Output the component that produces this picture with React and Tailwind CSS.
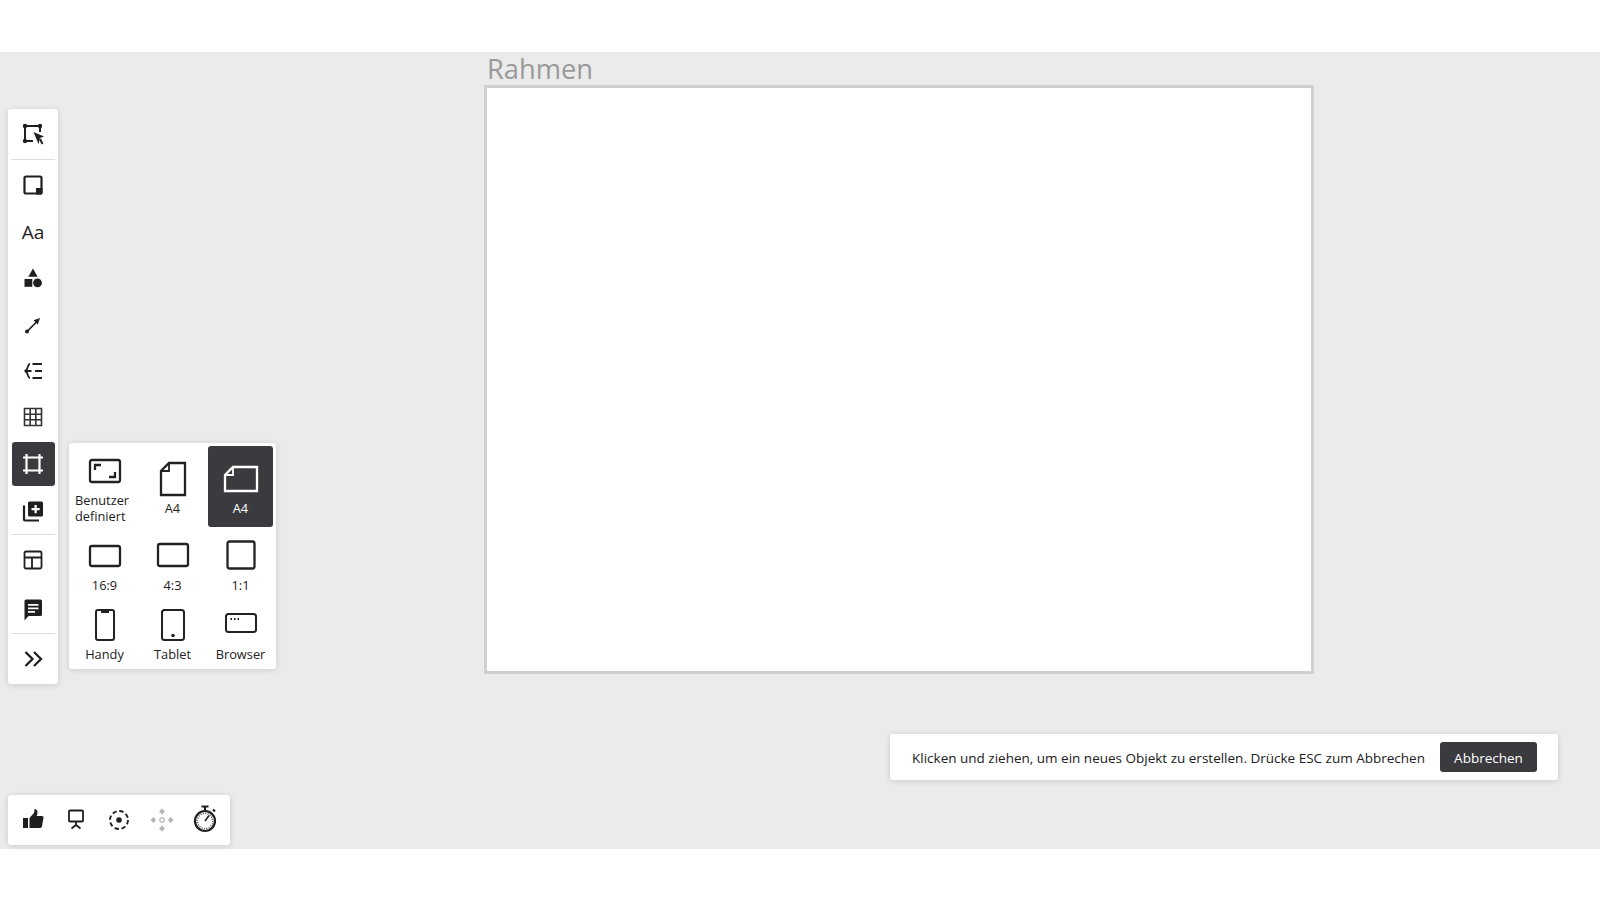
import React from "react";

const I = ({ children, s = 24, v = 24, c = "" }) => (
  <svg width={s} height={s} viewBox={`0 0 ${v} ${v}`} fill="none" stroke="currentColor" strokeWidth="2" className={c}>{children}</svg>
);

const Select = () => (
  <I v={24}>
    <path d="M4 4h15M4 4v15M4 19h8M19 4v6" strokeWidth="2" />
    <circle cx="4" cy="4" r="2.200" fill="currentColor" stroke="none" />
    <circle cx="19" cy="4" r="2.200" fill="currentColor" stroke="none" />
    <circle cx="4" cy="19" r="2.200" fill="currentColor" stroke="none" />
    <path d="M12.500 10l10.500 4.500-4 1.500-1.500 6z" fill="currentColor" stroke="none" />
    <path d="M19 17l2.500 5" strokeWidth="2" />
  </I>
);
const Sticky = () => (
  <I>
    <rect x="3.500" y="3.500" width="17" height="17" rx="1.500" strokeWidth="2.200" />
    <path d="M15 15h6.500v5a1.500 1.500 0 0 1-1.500 1.500h-5z" fill="currentColor" stroke="none" />
  </I>
);
const Shapes = () => (
  <I>
    <path d="M12 2.500l4.700 8.300h-9.400z" fill="currentColor" stroke="none" />
    <rect x="3.500" y="13" width="7.800" height="7.800" fill="currentColor" stroke="none" />
    <circle cx="16.500" cy="16.800" r="4.400" fill="currentColor" stroke="none" />
  </I>
);
const Conn = () => (
  <I>
    <circle cx="6" cy="18.500" r="2" fill="currentColor" stroke="none" />
    <path d="M6 18.500L16 8.500" strokeWidth="1.700" />
    <path d="M19 5l-6.500 2.200 4.300 4.300z" fill="currentColor" stroke="none" />
  </I>
);
const MindMap = () => (
  <I>
    <path d="M11.500 5H21M14 12h7M11.500 19H21" strokeWidth="2" />
    <path d="M9 5C6 5 7.500 12 3.500 12c4 0 2.500 7 5.500 7M3.500 12h7" strokeWidth="1.800" />
  </I>
);
const Grid = () => (
  <I>
    <path d="M3.500 3.500h17v17h-17zM3.500 9.200h17M3.500 14.800h17M9.200 3.500v17M14.800 3.500v17" strokeWidth="1.600" stroke="#333" />
  </I>
);
const Frame = () => (
  <I>
    <path d="M5.500 2v20M18.500 2v20M2 5.500h20M2 18.500h20" strokeWidth="2.200" />
  </I>
);
const AddLib = () => (
  <I>
    <path d="M3 6.500v14a1 1 0 0 0 1 1h14" strokeWidth="2.200" />
    <path fillRule="evenodd" clipRule="evenodd" d="M8.500 2.500h12a1.500 1.500 0 0 1 1.500 1.500v12a1.500 1.500 0 0 1-1.500 1.500h-12A1.500 1.500 0 0 1 7 16V4a1.500 1.500 0 0 1 1.500-1.500zM13.500 6v3H10.500v2.200h3v3h2.200v-3h3V9h-3V6z" fill="currentColor" stroke="none" />
  </I>
);
const Layout = () => (
  <I>
    <rect x="3.500" y="3.500" width="17" height="17" rx="1.500" strokeWidth="1.800" />
    <path d="M3.500 9.500h17M11 9.500v11" strokeWidth="1.800" />
  </I>
);
const Comment = () => (
  <I>
    <path fillRule="evenodd" clipRule="evenodd" d="M5 2.500h14.500A1.500 1.500 0 0 1 21 4v13.500a1.500 1.500 0 0 1-1.500 1.500H7.500L3.500 23.500V4A1.500 1.500 0 0 1 5 2.500zM7 7v1.800h10.500V7zM7 10.500v1.800h10.500v-1.800zM7 14v1.800h7V14z" fill="currentColor" stroke="none" />
  </I>
);
const More = () => (
  <I>
    <path d="M4.500 5l7 7-7 7M13 5l7 7-7 7" strokeWidth="2.300" />
  </I>
);

const Tool = ({ h = "h-[46px]", active, children }) => (
  <div className={`${h} flex items-center justify-center shrink-0`}>
    <div className={`w-[43px] h-[44px] rounded-[3px] flex items-center justify-center ${active ? "bg-[#3b3b3f] text-white" : "text-[#1f1f1f]"}`}>
      {children}
    </div>
  </div>
);
const Sep = () => <div className="h-px bg-[#dedede] mx-[3px] shrink-0" />;

const Tile = ({ label, active, icon, h, iconH, labelC = "" }) => (
  <div className={`${h} rounded-[3px] flex flex-col items-center ${active ? "bg-[#3b3b3f] text-white" : "text-[#222]"}`}>
    <div className={`${iconH} flex items-end justify-center shrink-0`}>{icon}</div>
    <div className={`text-[12.800px] leading-[15.500px] text-center whitespace-pre-line ${labelC}`}>{label}</div>
  </div>
);

const App = () => (
  <div className="w-[1600px] h-[900px] bg-white flex flex-col overflow-hidden" style={{ fontFamily: '"Open Sans","Noto Sans",sans-serif' }}>
    <div className="h-[52px] shrink-0 bg-white" />
    <div className="relative h-[797px] shrink-0 bg-[#ebebeb] pl-[484px]">
      <div className="text-[27.300px] leading-[33px] text-[#9a9a9a] pl-[3px]">Rahmen</div>
      <div className="w-[830px] h-[589px] bg-white border-[3px] border-[#d0d0d0]" />

      <div className="absolute left-[8px] top-[57px] w-[50px] h-[575px] bg-white rounded-[3px] shadow-[0_1px_6px_rgba(0,0,0,0.14)] flex flex-col">
        <Tool h="h-[50px]"><Select /></Tool>
        <Sep />
        <Tool h="h-[49px]"><Sticky /></Tool>
        <Tool><span className="text-[19px] leading-none">Aa</span></Tool>
        <Tool><Shapes /></Tool>
        <Tool h="h-[47px]"><Conn /></Tool>
        <Tool><MindMap /></Tool>
        <Tool><Grid /></Tool>
        <Tool h="h-[47px]" active><Frame /></Tool>
        <Tool h="h-[47px]"><AddLib /></Tool>
        <Sep />
        <Tool h="h-[50px]"><Layout /></Tool>
        <Tool h="h-[48px]"><Comment /></Tool>
        <Sep />
        <Tool h="h-[49px]"><More /></Tool>
      </div>

      <div className="absolute left-[69px] top-[391px] w-[207px] h-[226px] bg-white rounded-[3px] shadow-[0_1px_6px_rgba(0,0,0,0.14)] p-[3px] grid grid-cols-[65px_65px_65px] gap-x-[3px] grid-rows-[81px_68px_68px] gap-y-0">
        <Tile h="h-[81px]" iconH="h-[42px] -mt-px" label={"Benutzer\ndefiniert"} labelC="pt-[6px] -ml-[5px] text-left" icon={
          <svg width="34" height="30" viewBox="0 0 34 30" fill="none" stroke="currentColor" strokeWidth="2.300"><rect x="2" y="3" width="30" height="22" rx="2" /><path d="M7 13V8h6M27 15v5h-6" /></svg>
        } />
        <Tile h="h-[81px]" iconH="h-[51px]" label="A4" labelC="pt-[4px]" icon={
          <svg width="28" height="36" viewBox="0 0 28 36" fill="none" stroke="currentColor" strokeWidth="2.300"><path d="M10 2h16v32H2V10z" /><path d="M10 3v7H3" strokeWidth="1.800" /></svg>
        } />
        <Tile active h="h-[81px]" iconH="h-[47px]" label="A4" labelC="pt-[8px]" icon={
          <svg width="36" height="28" viewBox="0 0 36 28" fill="none" stroke="currentColor" strokeWidth="2.300"><path d="M10 2h24v24H2V10z" /><path d="M10 3v7H3" strokeWidth="1.800" /></svg>
        } />
        <Tile h="h-[68px]" iconH="h-[41px]" label="16:9" labelC="pt-[10px]" icon={
          <svg width="34" height="24" viewBox="0 0 34 24" fill="none" stroke="currentColor" strokeWidth="2.300"><rect x="2" y="2" width="30" height="20" rx="2" /></svg>
        } />
        <Tile h="h-[68px]" iconH="h-[41px]" label="4:3" labelC="pt-[10px]" icon={
          <svg width="34" height="26" viewBox="0 0 34 26" fill="none" stroke="currentColor" strokeWidth="2.300"><rect x="2" y="2" width="30" height="22" rx="2" /></svg>
        } />
        <Tile h="h-[68px]" iconH="h-[43px]" label="1:1" labelC="pt-[8px]" icon={
          <svg width="30" height="30" viewBox="0 0 30 30" fill="none" stroke="currentColor" strokeWidth="2.300"><rect x="1.500" y="1.500" width="27" height="27" rx="2" /></svg>
        } />
        <Tile h="h-[68px]" iconH="h-[47px]" label="Handy" labelC="pt-[5px]" icon={
          <svg width="22" height="34" viewBox="0 0 22 34" fill="none" stroke="currentColor" strokeWidth="2"><rect x="2" y="2" width="18" height="30" rx="2" /><path d="M7 3.500h8" strokeWidth="3" /></svg>
        } />
        <Tile h="h-[68px]" iconH="h-[47px]" label="Tablet" labelC="pt-[5px]" icon={
          <svg width="26" height="34" viewBox="0 0 26 34" fill="none" stroke="currentColor" strokeWidth="2"><rect x="2" y="2" width="22" height="30" rx="2.500" /><circle cx="13" cy="27.500" r="1.800" fill="currentColor" stroke="none" /></svg>
        } />
        <Tile h="h-[68px]" iconH="h-[39px]" label="Browser" labelC="pt-[13px]" icon={
          <svg width="34" height="22" viewBox="0 0 34 22" fill="none" stroke="currentColor" strokeWidth="2"><rect x="2" y="2" width="30" height="18" rx="2.500" /><path d="M6.500 7h1.500M10 7h1.500M13.500 7H15" strokeWidth="1.800" /></svg>
        } />
      </div>

      <div className="absolute left-[8px] top-[743px] w-[222px] h-[50px] bg-white rounded-[3px] shadow-[0_1px_6px_rgba(0,0,0,0.14)] flex items-center pl-[13px] gap-[19px] text-[#1f1f1f]">
        <svg className="-mt-[3px]" width="24" height="24" viewBox="0 0 24 24" fill="currentColor"><path d="M2 11h5v10H2zM8.500 11l4-4.500c.8-1 1-2.500 1-4.500 2 0 3 1.500 3 3.500 0 1.300-.3 2.500-.8 3.500H21c1 0 1.700.8 1.500 1.800l-1.500 8.500c-.2 1-1 1.700-2 1.700H8.500z" /></svg>
        <svg className="-mt-[2px]" width="24" height="24" viewBox="0 0 24 24" fill="none" stroke="currentColor" strokeWidth="1.800"><rect x="5" y="3.500" width="14" height="11" rx="1" /><path d="M12 15v3M7.500 21.500l4.500-3.500 4.500 3.500" /></svg>
        <svg className="-mt-px" width="24" height="24" viewBox="0 0 24 24" fill="none" stroke="currentColor" strokeWidth="1.900"><circle cx="12" cy="12" r="9" strokeDasharray="4.400 2.670" /><circle cx="12" cy="12" r="2.800" fill="currentColor" stroke="none" /></svg>
        <svg className="-mt-px" width="24" height="24" viewBox="0 0 24 24" fill="#b5b5b5" stroke="none"><path d="M12 .5l3 3-3 3-3-3zM12 23.500l-3-3 3-3 3 3zM.5 12l3-3 2.500 3-2.500 3zM23.500 12l-3 3-2.500-3 2.500-3z" /><circle cx="12" cy="12" r="2.200" fill="none" stroke="#b5b5b5" strokeWidth="1.200" /></svg>
        <svg className="-mt-[2px] -ml-px" width="26" height="28" viewBox="0 0 26 28" fill="none" stroke="currentColor"><circle cx="13" cy="16" r="10" strokeWidth="2.200" /><circle cx="13" cy="16" r="7.700" strokeWidth="1.500" strokeDasharray="1 1.420" stroke="#444" /><path d="M13 16l4-5.500" strokeWidth="1.600" /><path d="M9.500 1.500h7M13 2v4" strokeWidth="2.200" /><path d="M21 4.500l2 2" strokeWidth="2" /></svg>
      </div>

      <div className="absolute left-[890px] top-[682px] w-[668px] h-[46px] bg-white rounded-[3px] shadow-[0_1px_6px_rgba(0,0,0,0.14)] flex items-center pl-[22px] text-[#202020]">
        <span className="text-[13.500px] pt-[2px] whitespace-nowrap w-[528px] shrink-0">Klicken und ziehen, um ein neues Objekt zu erstellen. Drücke ESC zum Abbrechen</span>
        <div className="w-[97px] h-[30px] pt-[2px] bg-[#3b3b3f] text-white rounded-[3px] flex items-center justify-center text-[13.500px]">Abbrechen</div>
      </div>
    </div>
    <div className="flex-1 bg-white" />
  </div>
);

export default App;
